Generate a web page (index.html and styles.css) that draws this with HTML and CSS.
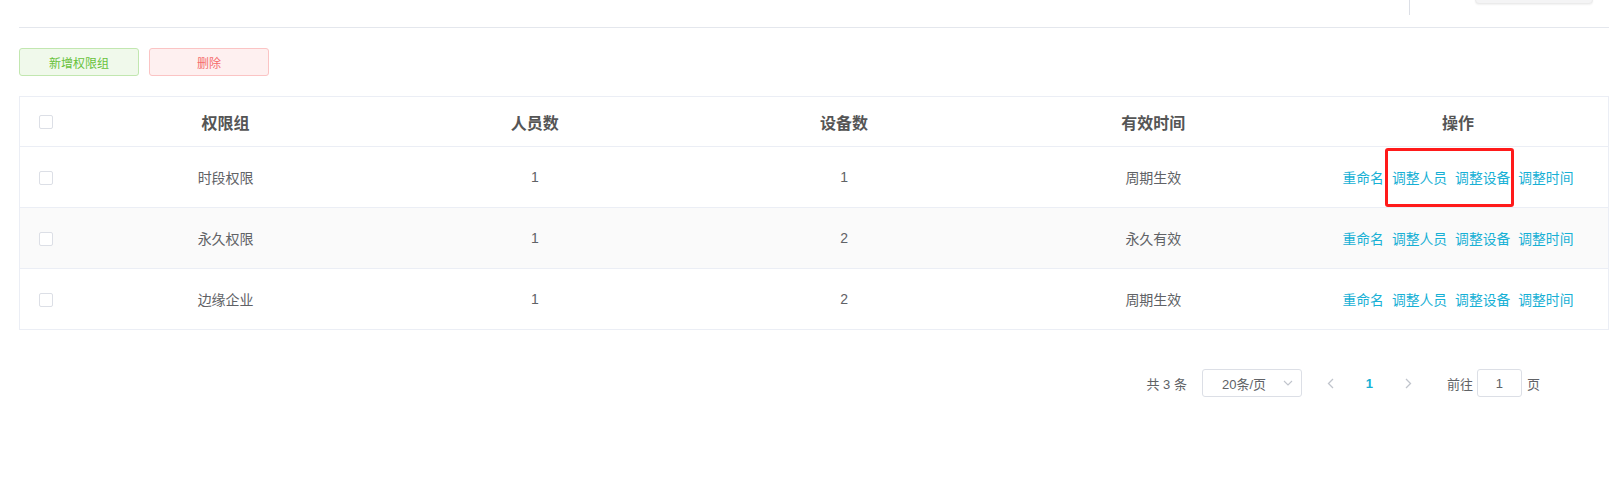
FILE: index.html
```html
<!DOCTYPE html>
<html lang="zh-CN">
<head>
<meta charset="UTF-8" />
<title>权限组管理</title>
<link rel="stylesheet" href="styles.css">
</head>
<body>

<div class="page">
  <!-- 顶部（已滚动，只露出一点） -->
  <div class="topbar">
    <span class="top-divider"></span>
    <span class="top-box"></span>
  </div>

  <div class="toolbar">
    <button class="btn btn-add">新增权限组</button>
    <button class="btn btn-del">删除</button>
  </div>

  <div class="table">
    <div class="row head">
      <div class="cell"><span class="checkbox"></span></div>
      <div class="cell">权限组</div>
      <div class="cell">人员数</div>
      <div class="cell">设备数</div>
      <div class="cell">有效时间</div>
      <div class="cell">操作</div>
    </div>

    <div class="row">
      <div class="cell"><span class="checkbox"></span></div>
      <div class="cell">时段权限</div>
      <div class="cell">1</div>
      <div class="cell">1</div>
      <div class="cell">周期生效</div>
      <div class="cell ops">
        <a>重命名</a>
        <span class="marked">
          <a>调整人员</a>
          <a>调整设备</a>
        </span>
        <a>调整时间</a>
      </div>
    </div>

    <div class="row stripe">
      <div class="cell"><span class="checkbox"></span></div>
      <div class="cell">永久权限</div>
      <div class="cell">1</div>
      <div class="cell">2</div>
      <div class="cell">永久有效</div>
      <div class="cell ops">
        <a>重命名</a>
        <a>调整人员</a>
        <a>调整设备</a>
        <a>调整时间</a>
      </div>
    </div>

    <div class="row">
      <div class="cell"><span class="checkbox"></span></div>
      <div class="cell">边缘企业</div>
      <div class="cell">1</div>
      <div class="cell">2</div>
      <div class="cell">周期生效</div>
      <div class="cell ops">
        <a>重命名</a>
        <a>调整人员</a>
        <a>调整设备</a>
        <a>调整时间</a>
      </div>
    </div>
  </div>

  <div class="pagination">
    <span class="total">共 3 条</span>
    <span class="sizes">
      20条/页
      <svg class="caret" width="10" height="6" viewBox="0 0 10 6"><path d="M1 1l4 4 4-4" fill="none" stroke="#c0c4cc" stroke-width="1.1"/></svg>
    </span>
    <span class="pg-btn prev">
      <svg width="7" height="11" viewBox="0 0 7 11"><path d="M6 1L1.5 5.5 6 10" fill="none" stroke="#c0c4cc" stroke-width="1.3"/></svg>
    </span>
    <span class="pg-btn current">1</span>
    <span class="pg-btn">
      <svg width="7" height="11" viewBox="0 0 7 11"><path d="M1 1l4.5 4.5L1 10" fill="none" stroke="#c0c4cc" stroke-width="1.3"/></svg>
    </span>
    <span class="jump">前往</span>
    <span class="jump-input">1</span>
    <span class="jump-tail">页</span>
  </div>
</div>

</body>
</html>
```

FILE: styles.css
```css
body {
  margin: 0;
  background: #fff;
  font-family: "Liberation Sans", "Noto Sans CJK SC", sans-serif;
  color: #606266;
}

.page {
  padding: 0 14px 0 19px;
}

/* 顶部分隔线 */
.topbar {
  height: 27px;
  border-bottom: 1px solid #e4e7ed;
  display: flex;
  justify-content: flex-end;
  align-items: flex-start;
  overflow: hidden;
}
.top-divider {
  width: 1px;
  height: 15px;
  background: #dcdfe6;
}
.top-box {
  width: 116px;
  height: 30px;
  margin: -28px 16px 0 65px;
  background: #f4f4f5;
  border: 1px solid #ebebeb;
  border-radius: 4px;
  box-shadow: 0 1px 2px rgba(0,0,0,0.06);
}

/* 按钮 */
.toolbar {
  margin-top: 20px;
  display: flex;
  gap: 10px;
}
.btn {
  width: 120px;
  height: 28px;
  font-family: inherit;
  font-size: 12px;
  border-radius: 3px;
  border: 1px solid;
  cursor: pointer;
  padding: 0;
}
.btn-add {
  background: #f0f9eb;
  border-color: #c2e7b0;
  color: #67c23a;
}
.btn-del {
  background: #fef0f0;
  border-color: #fbc4c4;
  color: #f56c6c;
}

/* 表格 */
.table {
  margin-top: 20px;
  border: 1px solid #ebeef5;
  border-bottom: none;
}
.row {
  display: grid;
  grid-template-columns: 51px repeat(4, 1fr) 300px;
  height: 60px;
  border-bottom: 1px solid #ebeef5;
  font-size: 14px;
}
.row.head {
  height: 49px;
  font-size: 16px;
  font-weight: bold;
  color: #555;
}
.row.stripe {
  background: #fafafa;
}
.cell {
  display: flex;
  align-items: center;
  justify-content: center;
}
.checkbox {
  width: 12px;
  height: 12px;
  border: 1px solid #dcdfe6;
  border-radius: 2px;
  background: #fff;
  margin: 1px 0 0 1px;
}

.ops {
  gap: 8px;
  font-size: 13.8px;
}
.ops a,
.marked a {
  color: #17b0d5;
  cursor: pointer;
}
.marked {
  position: relative;
  display: flex;
  gap: 8px;
}
/* 红色标注框 */
.marked::after {
  content: "";
  position: absolute;
  top: -19px;
  bottom: -20px;
  left: -7px;
  right: -4px;
  border: 3px solid #ff1a1a;
  border-radius: 3px;
}

/* 分页 */
.pagination {
  margin-top: 39px;
  display: flex;
  align-items: center;
  justify-content: flex-end;
  padding-right: 69px;
  font-size: 13px;
  color: #606266;
}
.total {
  margin-right: 15px;
}
.sizes {
  width: 100px;
  height: 28px;
  box-sizing: border-box;
  border: 1px solid #dcdfe6;
  border-radius: 3px;
  display: flex;
  align-items: center;
  padding-left: 19px;
}
.caret {
  margin-left: auto;
  margin-right: 8px;
}
.pg-btn {
  width: 39px;
  height: 28px;
  display: flex;
  align-items: center;
  justify-content: center;
}
.pg-btn.prev {
  margin-left: 9px;
}
.pg-btn.current {
  color: #17b0d5;
  font-weight: bold;
}
.jump {
  margin-left: 19px;
}
.jump-input {
  width: 45px;
  height: 28px;
  box-sizing: border-box;
  margin-left: 4px;
  border: 1px solid #dcdfe6;
  border-radius: 3px;
  display: flex;
  align-items: center;
  justify-content: center;
}
.jump-tail {
  margin-left: 5px;
}
```
